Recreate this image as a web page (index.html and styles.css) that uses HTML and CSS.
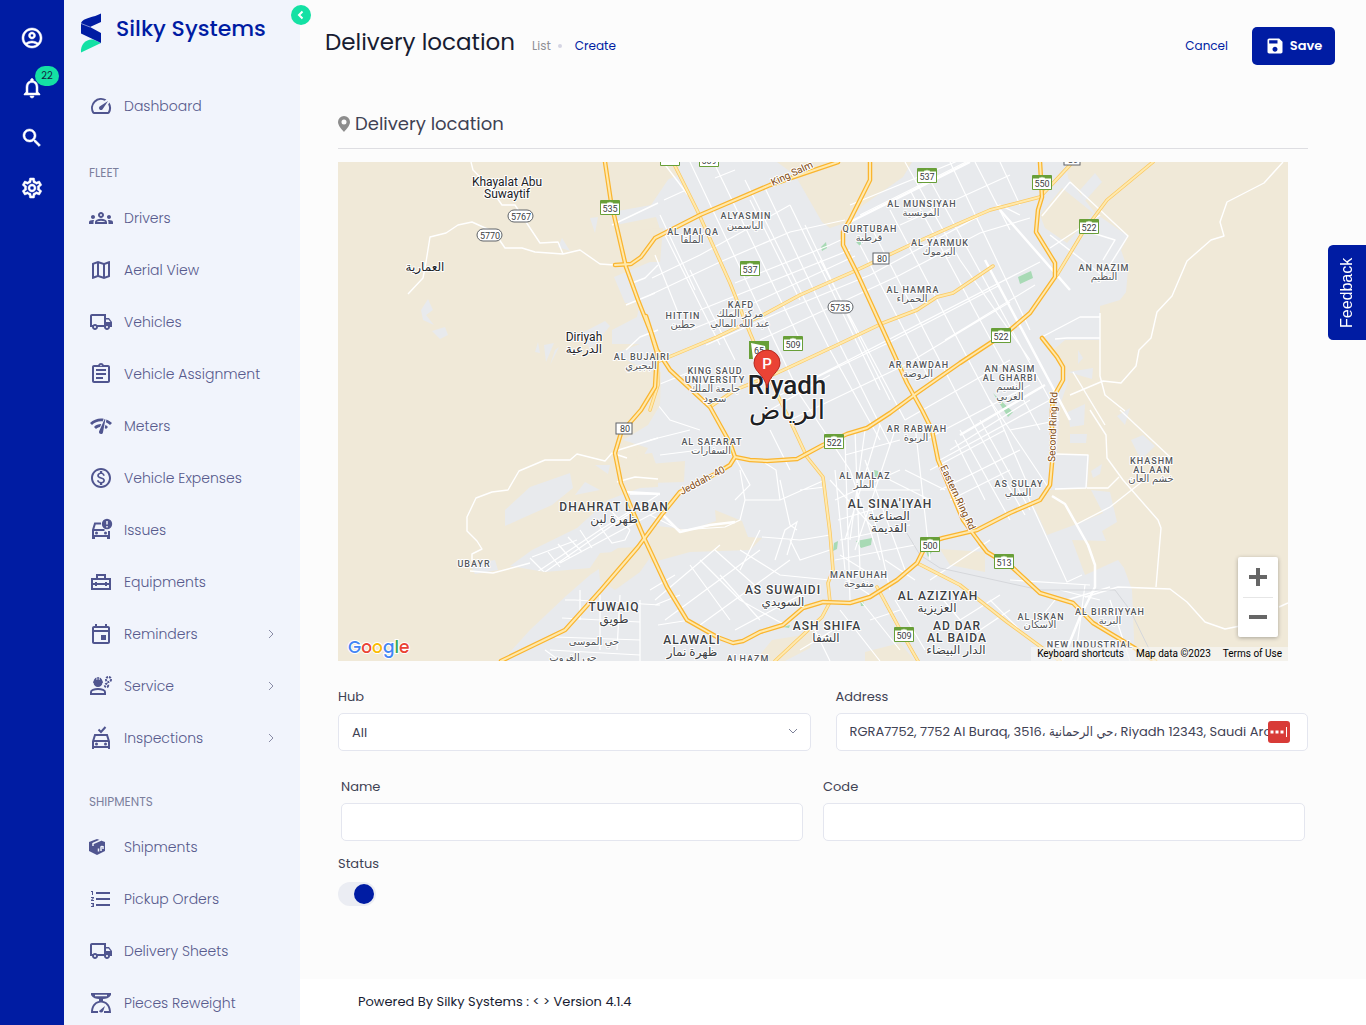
FILE: index.html
```
<!DOCTYPE html>
<html lang="en">

<head>
    <meta charset="utf-8">
    <meta name="viewport" content="width=device-width, initial-scale=1">
    <title>Delivery location - Silky Systems</title>
    <link rel="stylesheet" href="styles.css">
</head>

<body>
    <div class="app">
        <div class="rail">
            <button class="rail-btn" aria-label="Account">
                <svg class="icon" viewBox="0 0 24 24"><path d="M12 2C6.48 2 2 6.48 2 12s4.48 10 10 10 10-4.48 10-10S17.52 2 12 2zM7.35 18.5C8.66 17.56 10.26 17 12 17s3.34.56 4.65 1.5C15.34 19.44 13.74 20 12 20s-3.34-.56-4.65-1.5zm10.79-1.38C16.45 15.8 14.32 15 12 15s-4.45.8-6.14 2.12C4.7 15.73 4 13.95 4 12c0-4.42 3.58-8 8-8s8 3.58 8 8c0 1.95-.7 3.73-1.86 5.12zM12 6c-1.93 0-3.5 1.57-3.5 3.5S10.07 13 12 13s3.5-1.57 3.5-3.5S13.93 6 12 6zm0 5c-.83 0-1.5-.67-1.5-1.5S11.17 8 12 8s1.5.67 1.5 1.5S12.83 11 12 11z"/></svg>
            </button>
            <button class="rail-btn" aria-label="Notifications">
                <svg class="icon" viewBox="0 0 24 24"><path d="M12 22c1.1 0 2-.9 2-2h-4c0 1.1.9 2 2 2zm6-6v-5c0-3.07-1.63-5.64-4.5-6.32V4c0-.83-.67-1.5-1.5-1.5s-1.5.67-1.5 1.5v.68C7.64 5.36 6 7.92 6 11v5l-2 2v1h16v-1l-2-2zm-2 1H8v-6c0-2.48 1.51-4.5 4-4.5s4 2.02 4 4.5v6z"/></svg>
                <span class="badge">22</span>
            </button>
            <button class="rail-btn" aria-label="Search">
                <svg class="icon" viewBox="0 0 24 24"><path d="M15.5 14h-.79l-.28-.27C15.41 12.59 16 11.11 16 9.5 16 5.91 13.09 3 9.5 3S3 5.91 3 9.5 5.91 16 9.5 16c1.61 0 3.09-.59 4.23-1.57l.27.28v.79l5 4.99L20.49 19l-4.99-5zm-6 0C7.01 14 5 11.99 5 9.5S7.01 5 9.5 5 14 7.01 14 9.5 11.99 14 9.5 14z"/></svg>
            </button>
            <button class="rail-btn" aria-label="Settings">
                <svg class="icon" viewBox="0 0 24 24"><path d="M19.43 12.98c.04-.32.07-.64.07-.98s-.03-.66-.07-.98l2.11-1.65c.19-.15.24-.42.12-.64l-2-3.46c-.09-.16-.26-.25-.44-.25-.06 0-.12.01-.17.03l-2.49 1c-.52-.4-1.08-.73-1.69-.98l-.38-2.65C14.46 2.18 14.25 2 14 2h-4c-.25 0-.46.18-.49.42l-.38 2.65c-.61.25-1.17.59-1.69.98l-2.49-1c-.06-.02-.12-.03-.18-.03-.17 0-.34.09-.43.25l-2 3.46c-.13.22-.07.49.12.64l2.11 1.65c-.04.32-.07.65-.07.98s.03.66.07.98l-2.11 1.65c-.19.15-.24.42-.12.64l2 3.46c.09.16.26.25.44.25.06 0 .12-.01.17-.03l2.49-1c.52.4 1.08.73 1.69.98l.38 2.65c.03.24.24.42.49.42h4c.25 0 .46-.18.49-.42l.38-2.65c.61-.25 1.17-.59 1.69-.98l2.49 1c.06.02.12.03.18.03.17 0 .34-.09.43-.25l2-3.46c.12-.22.07-.49-.12-.64l-2.11-1.65zm-1.98-1.71c.04.31.05.52.05.73 0 .21-.02.43-.05.73l-.14 1.13.89.7 1.08.84-.7 1.21-1.27-.51-1.04-.42-.9.68c-.43.32-.84.56-1.25.73l-1.06.43-.16 1.13-.2 1.35h-1.4l-.19-1.35-.16-1.13-1.06-.43c-.43-.18-.83-.41-1.23-.71l-.91-.7-1.06.43-1.27.51-.7-1.21 1.08-.84.89-.7-.14-1.13c-.03-.31-.05-.54-.05-.74s.02-.43.05-.73l.14-1.13-.89-.7-1.08-.84.7-1.21 1.27.51 1.04.42.9-.68c.43-.32.84-.56 1.25-.73l1.06-.43.16-1.13.2-1.35h1.39l.19 1.35.16 1.13 1.06.43c.43.18.83.41 1.23.71l.91.7 1.06-.43 1.27-.51.7 1.21-1.07.85-.89.7.14 1.13zM12 8c-2.21 0-4 1.79-4 4s1.79 4 4 4 4-1.79 4-4-1.79-4-4-4zm0 6c-1.1 0-2-.9-2-2s.9-2 2-2 2 .9 2 2-.9 2-2 2z"/></svg>
            </button>
        </div>

        <aside class="sidebar">
            <a class="brand" href="#">
                <svg class="brand-logo" viewBox="0 0 22 40">
                    <path class="logo-green" d="M1 39.500C0 31 7 25.500 13 26.500l8 3.500z"/>
                    <path class="logo-blue" d="M21 .5V9l-11 5 11 6v10L1 20.500V10C3 4.500 14 4.500 21 .5z"/>
                    <path class="logo-line" d="M1 10.500l9 3.500"/>
                </svg>
                <span>Silky Systems</span>
            </a>
            <button class="collapse" aria-label="Collapse menu">
                <svg viewBox="0 0 20 20"><path d="M11.500 6.500L8 10l3.500 3.500"/></svg>
            </button>
            <nav>
                <ul class="menu menu-top">
                    <li><a href="#">
                        <svg class="icon" viewBox="0 0 24 24"><path d="M20.38 8.57l-1.23 1.85a8 8 0 0 1-.22 7.58H5.07A8 8 0 0 1 15.58 6.85l1.85-1.23A10 10 0 0 0 3.35 19a2 2 0 0 0 1.72 1h13.85a2 2 0 0 0 1.74-1 10 10 0 0 0-.27-10.440z"/><path d="M10.59 15.41a2 2 0 0 0 2.83 0l5.66-8.49-8.49 5.66a2 2 0 0 0 0 2.83z"/></svg>
                        Dashboard</a></li>
                </ul>
                <h2 class="menu-title">FLEET</h2>
                <ul class="menu">
                    <li><a href="#">
                        <svg class="icon" viewBox="0 0 24 24"><path fill-rule="evenodd" d="M12 12.750c1.63 0 3.07.39 4.24.9 1.08.48 1.76 1.56 1.76 2.73V18H6v-1.610c0-1.180.68-2.260 1.760-2.730 1.170-.52 2.610-.91 4.240-.91zM8.070 16h7.860c-.1-.23-.14-.39-.91-.69-.97-.38-1.990-.56-3.020-.56s-2.050.18-3.020.56c-.78.3-.82.460-.91.690zM4 13c1.100 0 2-.9 2-2s-.9-2-2-2-2 .9-2 2 .9 2 2 2zm1.130 1.100c-.37-.06-.74-.1-1.130-.1-.99 0-1.930.21-2.780.58C.48 14.900 0 15.620 0 16.430V18h4.500v-1.610c0-.83.23-1.610.63-2.290zM20 13c1.100 0 2-.9 2-2s-.9-2-2-2-2 .9-2 2 .9 2 2 2zm4 3.430c0-.81-.48-1.530-1.220-1.850-.85-.37-1.790-.58-2.780-.58-.39 0-.76.04-1.130.1.400.680.630 1.460.630 2.290V18H24v-1.570zM12 6c1.660 0 3 1.340 3 3s-1.340 3-3 3-3-1.340-3-3 1.340-3 3-3zm0 2a1 1 0 1 0 0 2 1 1 0 0 0 0-2z"/></svg>
                        Drivers</a></li>
                    <li><a href="#">
                        <svg class="icon" viewBox="0 0 24 24"><path d="M20.500 3l-.16.03L15 5.100 9 3 3.360 4.900c-.21.07-.36.25-.36.48V20.500c0 .28.22.5.5.5l.16-.03L9 18.900l6 2.100 5.640-1.900c.21-.07.36-.25.36-.48V3.500c0-.28-.22-.5-.5-.5zM10 5.470l4 1.400v11.660l-4-1.400V5.470zm-5 .99l3-1.010v11.700l-3 1.160V6.460zm14 11.080l-3 1.010V6.860l3-1.160v11.840z"/></svg>
                        Aerial View</a></li>
                    <li><a href="#">
                        <svg class="icon" viewBox="0 0 24 24"><path d="M20 8h-3V4H3c-1.100 0-2 .9-2 2v11h2c0 1.660 1.340 3 3 3s3-1.340 3-3h6c0 1.660 1.340 3 3 3s3-1.340 3-3h2v-5l-3-4zm-.5 1.500l1.960 2.500H17V9.500h2.500zM6 18c-.55 0-1-.45-1-1s.45-1 1-1 1 .45 1 1-.45 1-1 1zm2.220-3c-.55-.61-1.330-1-2.220-1s-1.670.39-2.220 1H3V6h12v9H8.220zM18 18c-.55 0-1-.45-1-1s.45-1 1-1 1 .45 1 1-.45 1-1 1z"/></svg>
                        Vehicles</a></li>
                    <li><a href="#">
                        <svg class="icon" viewBox="0 0 24 24"><path d="M7 15h7v2H7zm0-4h10v2H7zm0-4h10v2H7zm12-4h-4.180C14.400 1.840 13.300 1 12 1c-1.300 0-2.400.84-2.820 2H5c-1.100 0-2 .9-2 2v14c0 1.100.9 2 2 2h14c1.100 0 2-.9 2-2V5c0-1.100-.9-2-2-2zm-7-.25c.41 0 .75.34.75.75s-.34.75-.75.75-.75-.34-.75-.75.34-.75.75-.75zM19 19H5V5h14v14z"/></svg>
                        Vehicle Assignment</a></li>
                    <li><a href="#">
                        <svg class="icon" viewBox="0 0 24 24"><path d="M15.900 5c-.17 0-.32.09-.41.23l-.07.15-5.180 11.650c-.16.29-.26.61-.26.96 0 1.110.9 2.010 2.010 2.010.96 0 1.770-.68 1.960-1.590l.01-.03L16.400 5.500c0-.28-.22-.5-.5-.5zM1 9l2 2c2.880-2.880 6.790-4.080 10.530-3.620l1.190-2.680C9.890 3.840 4.740 5.270 1 9zm20 2l2-2c-1.640-1.640-3.550-2.820-5.590-3.570l-.53 2.820c1.500.62 2.900 1.530 4.120 2.750zm-4 4l2-2c-.8-.8-1.700-1.420-2.660-1.890l-.55 2.920c.42.27.83.59 1.210.97zM5 13l2 2c1.130-1.130 2.560-1.790 4.030-2l1.280-2.880c-2.630-.08-5.300.87-7.310 2.880z"/></svg>
                        Meters</a></li>
                    <li><a href="#">
                        <svg class="icon" viewBox="0 0 24 24"><path d="M12 2C6.480 2 2 6.480 2 12s4.480 10 10 10 10-4.480 10-10S17.520 2 12 2zm0 18c-4.410 0-8-3.590-8-8s3.590-8 8-8 8 3.590 8 8-3.590 8-8 8zm.31-8.860c-1.770-.45-2.340-.94-2.340-1.670 0-.84.79-1.430 2.100-1.430 1.380 0 1.900.66 1.940 1.640h1.710c-.05-1.340-.87-2.570-2.490-2.970V5H10.900v1.690c-1.510.32-2.720 1.300-2.720 2.810 0 1.790 1.490 2.690 3.660 3.210 1.950.46 2.340 1.150 2.340 1.870 0 .53-.39 1.390-2.100 1.390-1.600 0-2.230-.72-2.320-1.640H8.040c.1 1.700 1.360 2.660 2.860 2.970V19h2.340v-1.670c1.520-.29 2.720-1.160 2.730-2.770-.01-2.200-1.900-2.960-3.660-3.420z"/></svg>
                        Vehicle Expenses</a></li>
                    <li><a href="#">
                        <svg class="icon" viewBox="0 0 24 24"><path class="line" d="M12 5.500H6L4 12v9M4 12h11.500M4 18h16M20 13v8"/><circle cx="7.500" cy="15" r="1.500"/><circle cx="16.500" cy="15" r="1.500"/><path d="M3 18h3v3H3zM18 18h3v3h-3z"/><circle cx="18" cy="6" r="5.200"/><path class="cut" d="M18 3v3.500M18 8v1.500"/></svg>
                        Issues</a></li>
                    <li><a href="#">
                        <svg class="icon" viewBox="0 0 24 24"><path class="line" d="M3 9h18v10H3zM8 9V5h8v4M3 14h18"/><path d="M6 12h2v4H6zM16 12h2v4h-2z"/></svg>
                        Equipments</a></li>
                    <li><a href="#">
                        <svg class="icon" viewBox="0 0 24 24"><path d="M19 4h-1V2h-2v2H8V2H6v2H5c-1.110 0-1.990.9-1.990 2L3 20c0 1.100.89 2 2 2h14c1.100 0 2-.9 2-2V6c0-1.100-.9-2-2-2zm0 16H5V10h14v10zm0-12H5V6h14v2zm-2 5h-5v5h5v-5z"/></svg>
                        Reminders <svg class="chev" viewBox="0 0 8 10"><path d="M2 1l4 4-4 4"/></svg></a></li>
                    <li><a href="#">
                        <svg class="icon" viewBox="0 0 24 24"><path class="line" d="M2 20v-2c0-1.500 3-3 7-3s7 1.500 7 3v2z"/><path d="M4 7.500h.6C4.800 5.500 6 4 7.500 3.500V6h.8V3h1.500v3h.8V3.500C12 4 13.300 5.500 13.500 7.500h.5v1.200h-.6c0 2.600-2 4.300-4.400 4.300s-4.400-1.700-4.400-4.300H4z"/><circle class="gear" cx="19.500" cy="5.500" r="2.500"/><circle class="gear" cx="17.500" cy="11.500" r="1.700"/></svg>
                        Service <svg class="chev" viewBox="0 0 8 10"><path d="M2 1l4 4-4 4"/></svg></a></li>
                    <li><a href="#">
                        <svg class="icon" viewBox="0 0 24 24"><path class="line" d="M4 23v-7.500L6 9h12l2 6.500V23M4 15h16M4 21h16"/><circle cx="7.500" cy="18" r="1.500"/><circle cx="16.500" cy="18" r="1.500"/><path class="line" d="M9.500 3.500L12 6l4.500-5"/></svg>
                        Inspections <svg class="chev" viewBox="0 0 8 10"><path d="M2 1l4 4-4 4"/></svg></a></li>
                </ul>
                <h2 class="menu-title">SHIPMENTS</h2>
                <ul class="menu">
                    <li><a href="#">
                        <svg class="icon" viewBox="0 0 24 24"><path d="M8 4l8 3v9l-8 4-8-4V7z"/><path class="cut" d="M4 8.500l8-3.500M9.500 16.500v-3M12 16v-4l1.500-1M14 14v-3M4 8v3"/></svg>
                        Shipments</a></li>
                    <li><a href="#">
                        <svg class="icon" viewBox="0 0 24 24"><path d="M2 17h2v.5H3v1h1v.5H2v1h3v-4H2v1zm1-9h1V4H2v1h1v3zm-1 3h1.800L2 13.100v.9h3v-1H3.200L5 10.900V10H2v1zm5-6v2h14V5H7zm0 14h14v-2H7v2zm0-6h14v-2H7v2z"/></svg>
                        Pickup Orders</a></li>
                    <li><a href="#">
                        <svg class="icon" viewBox="0 0 24 24"><path d="M20 8h-3V4H3c-1.100 0-2 .9-2 2v11h2c0 1.660 1.340 3 3 3s3-1.340 3-3h6c0 1.660 1.340 3 3 3s3-1.340 3-3h2v-5l-3-4zm-.5 1.500l1.960 2.500H17V9.500h2.500zM6 18c-.55 0-1-.45-1-1s.45-1 1-1 1 .45 1 1-.45 1-1 1zm2.220-3c-.55-.61-1.330-1-2.220-1s-1.670.39-2.220 1H3V6h12v9H8.220zM18 18c-.55 0-1-.45-1-1s.45-1 1-1 1 .45 1 1-.45 1-1 1z"/></svg>
                        Delivery Sheets</a></li>
                    <li><a href="#">
                        <svg class="icon" viewBox="0 0 24 24"><path d="M2 2h20v2c-2 3-5 4-8 4v2c5 1 8 5 8 12h-7v-2h5c-.5-5-3.500-8.500-8-8.500S4.500 15 4 20h5v2H2C2 15 5 11 10 10V8C7 8 4 7 2 4z"/><path d="M10 20l6-5-2 5.500a2.200 2.200 0 0 1-4-.5z"/><path class="cut" d="M6 4.500h12"/></svg>
                        Pieces Reweight</a></li>
                </ul>
            </nav>
        </aside>

        <main class="main">
            <header class="page-head">
                <h1>Delivery location</h1>
                <div class="crumbs">
                    <a class="crumb-list" href="#">List</a>
                    <span class="dot"></span>
                    <a href="#">Create</a>
                </div>
                <a class="cancel" href="#">Cancel</a>
                <button class="save" type="submit" form="location-form">
                    <svg viewBox="0 0 24 24"><path d="M17 3H5c-1.110 0-2 .9-2 2v14c0 1.100.89 2 2 2h14c1.100 0 2-.9 2-2V7l-4-4zm-5 16c-1.660 0-3-1.340-3-3s1.340-3 3-3 3 1.340 3 3-1.340 3-3 3zm3-10H5V5h10v4z"/></svg>
                    Save
                </button>
            </header>

            <form class="content" id="location-form">
                <h2 class="section-title">
                    <svg viewBox="0 0 12 16"><path fill-rule="evenodd" d="M6 0a6 6 0 0 1 6 6c0 3.500-3.500 7-6 10C3.500 13 0 9.500 0 6a6 6 0 0 1 6-6zm0 3.500a2.500 2.500 0 1 0 0 5 2.500 2.500 0 0 0 0-5z"/></svg>
                    Delivery location
                </h2>

                <div class="map">
                    <svg class="map-canvas" viewBox="338 162 950 499" preserveAspectRatio="xMidYMid slice">
                        <defs>
                            <path id="city" d="M680 162H1066L1068 178 1095 213 1128 236 1121 250 1128 270 1126 292 1120 300 1100 306V340H1065L1053 350 1064 365 1068 382 1060 405 1057 455H1089L1087 488 1050 490 1032 502 1047 535 1077 524 1103 513 1091 490 1110 492 1117 522 1102 531 1106 541 1072 540 1085 575 1118 560 1124 568 1132 590 1135 661H502L530 630 566 596 590 575 640 563 660 545 645 550 600 553 590 568 545 572 510 566 532 550 577 528 608 500 640 488 658 487V468L640 462 648 448 623 440 648 425 660 405 661 372 648 370 630 362 616 353 640 344H612V330L637 317 640 303 625 303 614 277 650 262 661 232 656 217 616 225 612 212 651 205Z"/>
                            <clipPath id="city-clip"><use href="#city"/></clipPath>
                            <g id="highways">
                                <path d="M605 162L611 202 626 267 638 300 651 333 657 353 655 387 641 410 621 433 615 453 621 483 631 507 645 540 667 587 687 620 717 637 733 643 743 641 760 632 783 625 803 608 823 602 850 603 870 597 897 580 917 563 927 543 943 538 977 530 1010 513 1040 500 1050 485 1052 463V410L1053 398 1063 380V367L1057 357 1042 338"/>
                                <path d="M1040 162L1042 197 1038 210 1036 232 1055 263V277L1030 313 1010 330 960 363 917 393 890 413 867 428 847 434 823 445 797 459 767 461 750 460 735 457"/>
                                <path d="M615 265L631 264 641 257 655 238 700 215 770 185 838 162"/>
                                <path d="M870 162V180L850 220 843 232V245L857 273 883 330 907 383 922 410 932 430 938 460 963 520 980 543 987 552 1013 568 1040 593 1073 603 1093 623 1133 647 1155 661"/>
                                <path d="M646 316L657 350 670 370 710 407 730 443 735 457 730 465 717 473 680 492 663 513 638 547 601 590 565 630 501 661"/>
                            </g>
                            <g id="arterials">
                                <path d="M673 162L697 210 730 283 750 333 767 373 793 427 807 457 823 477 830 533 833 570 828 583 830 602 822 617 775 661"/>
                                <path d="M657 362L717 337 763 315 800 295 857 270 910 245 960 223 990 210 1040 197 1070 165"/>
                                <path d="M710 407L735 390 777 373 837 345 883 323 917 310 937 297 953 293 993 266"/>
                                <path d="M1057 275L1083 232 1107 200 1153 162"/>
                                <path d="M917 563L960 585 1007 622 1060 661"/>
                                <path d="M877 587L903 635 918 661"/>
                                <path d="M657 355L658 385 650 410"/>
                            </g>
                            <symbol id="shield" viewBox="0 0 20 15">
                                <rect class="shield-green" width="20" height="15" rx="1"/>
                                <path class="shield-white" d="M1 3.500H7L8 2 9 3 10 1.500 11 3 12 2 13 3.500H19V14H1z"/>
                            </symbol>
                        </defs>

                        <rect class="sand" x="338" y="162" width="950" height="499"/>
                        <use class="city" href="#city"/>
                        <g class="city">
                            <path d="M505 510L530 487 570 473 573 488 552 505 525 517 505 526zM428 299L433 310 426 315 434 325 423 320 421 310zM432 331L445 327 448 335 440 339zM535 352L538 342 540 353zM544 345L554 343 546 362zM555 350L559 347 550 365zM582 333L605 321 610 326 590 350zM590 218L598 217 595 233zM558 247L562 238 570 251zM470 564L495 560 498 570 475 574zM590 575L612 560 618 562 600 580zM595 465H610L608 474zM575 495L585 482 600 490z"/>
                            <path d="M1131 440L1143 435 1155 446 1141 460zM1117 416L1130 408 1125 425zM1091 471L1102 464 1100 474 1093 478zM1078 350L1083 358 1078 364zM1080 190L1095 173 1102 182 1084 202zM1068 372L1093 368 1092 379zM1068 412L1085 404 1084 425 1070 427zM1070 434H1087L1086 443H1070z"/>
                        </g>
                        <g class="sand">
                            <path d="M777 162H912L903 177 862 206 848 222 830 228 822 222 795 175z"/>
                            <path d="M1040 215L1062 188 1093 213 1067 243 1045 228zM650 464L685 461 684 482 650 483zM636 455L652 453 658 470 640 465z"/>
                            <path d="M650 525L690 530 716 521 715 510 742 521 748 537 762 538 750 550 690 552 650 563zM772 640L803 635 815 625 810 648 785 661H755zM865 652L900 643 915 661H865zM940 549L985 552 985 572 950 565z"/>
                            <path d="M598 560L618 548 658 546 640 572 615 590 600 580zM650 162H680L677 176 650 186zM640 230L663 228 660 262H648z"/>
                        </g>
                        <g class="park">
                            <path d="M1018 277L1031 271 1033 278 1020 284zM821 247L826 242 827 248 822 251zM856 242L862 241 860 246zM993 393L998 398 1013 412 1008 417zM856 541L872 538 871 545 861 548zM834 543L838 541 837 549 833 551zM874 470L878 471 880 480 875 477zM860 600H863L864 606H861zM926 551L932 552 928 557zM783 627L790 625 789 628z"/>
                        </g>

                        <g class="streets" clip-path="url(#city-clip)">
                            <path d="M664 200L686 190M715 178L735 170M650 295L720 262 790 232 845 220M652 278L700 255 760 222 790 205M735 283L830 245 845 238M700 310L850 250M690 330L720 318 760 300 855 256M706 345L780 312 870 275 1000 205 1020 215M760 340L900 275 980 233 1030 218M650 388L700 368M780 395L890 342 1000 285M790 420L905 365 1010 302M800 385L1040 262M945 340L1035 285M860 215L1030 130M850 205L960 160M900 225L1010 175M700 385L740 366M905 420L1010 360M925 440L1030 385M940 460L1050 400M770 410L830 375"/>
                            <path d="M690 162L760 310 800 395 850 470M715 165L800 340M745 180L830 350 880 440M765 188L840 345 890 445M665 235L720 345M690 270L735 360M655 255L685 330M805 225L860 340M790 205L880 390M820 260L905 420M870 225L960 400 1010 490M890 210L1000 420 1030 490M910 190L980 320 1040 430M930 180L1050 400M905 162L960 260 1030 360M950 162L1030 330M975 162L1010 230M1000 162L1020 205M860 245L930 380M840 300L890 400M750 200L800 300M660 215L695 290"/>
                            <path d="M650 395L670 420 700 430M690 430L650 440M660 455L700 450M740 470L745 500 740 520 725 527 680 530 650 515M745 500H780L776 470 765 463M780 480L790 525 797 530M800 490L825 487M780 500L825 480M770 430L790 470M735 457L750 485 735 500M762 537L800 540 830 535M775 560L785 530 797 522 787 555M790 540L800 560 830 550M740 550L780 575 830 580M760 530L740 570M700 560L740 600M715 550L760 590M690 565L730 620M655 600L720 545M665 620L760 550M700 625L790 560M735 630L810 590M740 600L785 625M720 575L760 620M810 620L830 661M840 610L880 661M860 600L900 650M800 650L850 620"/>
                            <path d="M835 470L845 570M845 440L850 600M855 430L860 570M865 430L850 540M880 425L845 540M895 430L855 550M835 500L900 470M838 520L905 500M840 540L910 525M835 560L915 545M850 470L880 560M865 460L905 570M830 480L875 530M840 555L880 580M855 490H920M845 455L900 440M905 470L945 490M915 425L930 560M890 480L930 500M930 580L990 540M870 500L890 590M840 575L870 595M885 560L915 580"/>
                            <path d="M930 470L1005 430M940 490L1020 450M960 430L1010 520M980 420L1030 510M950 500L1010 470M990 400L1050 490M955 440L985 500M1025 490L1067 582 1082 575M1005 480L1025 515M950 450L1030 400M1010 430L1060 420M895 600L925 650M935 590L960 620 1000 595M870 620L900 610M965 640L1010 610M990 600L1030 640M1010 580L1090 585M1060 590L1100 600M1085 585L1075 661M1055 600L1035 625M1110 600L1130 661"/>
                            <path d="M532 557L577 540M537 572L600 530 640 505M545 572L620 520 658 495M560 563L665 507M530 558L545 573M548 552L560 567M558 544L570 558M568 537L582 552M580 530L592 548M595 520L612 543 625 540 630 530M610 510L630 530M565 600L575 600 660 605M562 618L640 622M580 590V620M600 595V650M620 595L617 650M640 600V661M555 637L640 640M550 650L640 655M545 650L560 661M650 590L675 575M655 605L680 595M658 625L690 620"/>
                        </g>
                        <g class="roads">
                            <path d="M408 294L423 278 426 262 430 237 446 233 458 225 472 222 494 232 505 248 522 248 535 252 563 254 580 250 600 264 615 265M471 162L473 170 488 185 502 205 515 205 530 228 540 243 558 242 563 254M663 162L688 195M612 225L658 203M626 305L655 293M632 283L645 278 658 265M626 350L640 337 658 330"/>
                            <path d="M472 561L472 554 482 549 477 541 467 531V517L476 498 492 492 508 490 519 471 545 460 570 460 577 454 605 461 612 453 627 458M470 571L493 573 530 563M617 482L635 477 658 479M615 451L658 438M630 494H658"/>
                            <path d="M1283 162L1264 183 1227 202 1220 222 1224 236 1211 240 1187 261 1172 296 1157 312 1151 338 1139 350 1136 366 1121 383 1103 381 1070 395M1100 313V376L1105 395 1125 411"/>
                            <path d="M1070 182L1128 236 1103 276 1050 235M1042 216L1070 182M1050 248L1100 215M1083 230L1115 240 1103 260M1040 338L1080 317H1100M1055 339L1067 338 1100 338"/>
                            <path d="M1090 410L1106 435 1107 458 1123 480 1158 520 1161 528 1156 587M1120 410L1170 457M1055 454L1088 455 1086 488 1055 489M1087 488H1108L1119 477M1077 524L1110 507 1143 481M1073 372L1105 425"/>
                            <path d="M1085 597L1118 587 1170 589 1187 602 1205 622 1225 629 1240 626M1279 607L1288 603M1067 600L1110 587"/>
                            <path class="wide" d="M1052 496L1065 504 1088 545 1095 565V587L1080 617 1062 661M850 222L970 162M1000 210L1070 290M960 435L1045 385M625 492L660 494M985 260L1070 420M663 515L680 532 710 525 735 522"/>
                        </g>
                        <path class="rail-line" d="M905 530L920 555 940 568 1040 590 1115 590 1130 610 1155 661"/>

                        <use class="edge thin" href="#arterials"/>
                        <use class="fill thin" href="#arterials"/>
                        <use class="edge" href="#highways"/>
                        <use class="fill" href="#highways"/>

                        <g class="lbl town">
                            <text x="507" y="186">Khayalat Abu</text>
                            <text x="507" y="198">Suwaytif</text>
                            <text x="425" y="271">العمارية</text>
                            <text x="584" y="341">Diriyah</text>
                            <text x="584" y="353">الدرعية</text>
                        </g>
                        <g class="lbl small">
                            <text x="746" y="219">ALYASMIN</text>
                            <text x="693" y="235">AL MALQA</text>
                            <text x="870" y="232">QURTUBAH</text>
                            <text x="922" y="207">AL MUNSIYAH</text>
                            <text x="940" y="246">AL YARMUK</text>
                            <text x="913" y="293">AL HAMRA</text>
                            <text x="1104" y="271">AN NAZIM</text>
                            <text x="741" y="308">KAFD</text>
                            <text x="683" y="319">HITTIN</text>
                            <text x="642" y="360">AL BUJAIRI</text>
                            <text x="715" y="374">KING SAUD</text>
                            <text x="715" y="383">UNIVERSITY</text>
                            <text x="919" y="368">AR RAWDAH</text>
                            <text x="1010" y="372">AN NASIM</text>
                            <text x="1010" y="381">AL GHARBI</text>
                            <text x="712" y="445">AL SAFARAT</text>
                            <text x="917" y="432">AR RABWAH</text>
                            <text x="865" y="479">AL MALAZ</text>
                            <text x="1019" y="487">AS SULAY</text>
                            <text x="1152" y="464">KHASHM</text>
                            <text x="1152" y="473">AL AAN</text>
                            <text x="859" y="578">MANFUHAH</text>
                            <text x="474" y="567">UBAYR</text>
                            <text x="1041" y="620">AL ISKAN</text>
                            <text x="1110" y="615">AL BIRRIYYAH</text>
                            <text x="1090" y="648">NEW INDUSTRIAL</text>
                            <text x="748" y="662">ALHAZM</text>
                        </g>
                        <g class="lbl big">
                            <text x="614" y="511">DHAHRAT LABAN</text>
                            <text x="890" y="508">AL SINA'IYAH</text>
                            <text x="783" y="594">AS SUWAIDI</text>
                            <text x="614" y="611">TUWAIQ</text>
                            <text x="692" y="644">ALAWALI</text>
                            <text x="827" y="630">ASH SHIFA</text>
                            <text x="938" y="600">AL AZIZIYAH</text>
                            <text x="957" y="630">AD DAR</text>
                            <text x="957" y="642">AL BAIDA</text>
                        </g>
                        <g class="lbl ar">
                            <text x="745" y="229">الياسمين</text>
                            <text x="692" y="243">الملقا</text>
                            <text x="869" y="241">قرطبة</text>
                            <text x="921" y="216">المونسية</text>
                            <text x="939" y="255">اليرموك</text>
                            <text x="912" y="302">الحمراء</text>
                            <text x="1104" y="280">النظيم</text>
                            <text x="740" y="317">مركز الملك</text>
                            <text x="740" y="327">عبد الله المالي</text>
                            <text x="683" y="328">حطين</text>
                            <text x="641" y="369">البجيري</text>
                            <text x="715" y="392">جامعة الملك</text>
                            <text x="715" y="402">سعود</text>
                            <text x="918" y="377">الروضة</text>
                            <text x="1010" y="390">النسيم</text>
                            <text x="1010" y="400">الغربي</text>
                            <text x="711" y="454">السفارات</text>
                            <text x="916" y="441">الربوة</text>
                            <text x="864" y="488">الملز</text>
                            <text x="1018" y="496">السلي</text>
                            <text x="1151" y="482">خشم العان</text>
                            <text x="859" y="587">منفوحة</text>
                            <text x="1040" y="628">الاسكان</text>
                            <text x="1110" y="624">البرية</text>
                            <text x="594" y="645">حي الموسى</text>
                            <text x="573" y="661">حي الغروب</text>
                        </g>
                        <g class="lbl ar-big">
                            <text x="614" y="523">ظهرة لبن</text>
                            <text x="889" y="520">الصناعية</text>
                            <text x="889" y="532">القديمة</text>
                            <text x="783" y="606">السويدي</text>
                            <text x="614" y="623">طويق</text>
                            <text x="692" y="656">ظهرة نمار</text>
                            <text x="826" y="642">الشفا</text>
                            <text x="937" y="612">العزيزية</text>
                            <text x="956" y="654">الدار البيضاء</text>
                        </g>
                        <g class="lbl road-name">
                            <text transform="translate(773 186) rotate(-25)">King Salm</text>
                            <text transform="translate(682 495) rotate(-28)">Jeddah- 40</text>
                            <text transform="translate(940 467) rotate(65)">Eastern Ring Rd</text>
                            <text transform="translate(1055 462) rotate(-88)">Second Ring Rd</text>
                        </g>

                        <g class="shields">
                            <use href="#shield" x="600" y="200" width="20" height="15"/><text x="610" y="212">535</text>
                            <use href="#shield" x="660" y="151" width="20" height="15"/>
                            <use href="#shield" x="699" y="152" width="20" height="15"/><text x="709" y="164">509</text>
                            <use href="#shield" x="917" y="168" width="20" height="15"/><text x="927" y="180">537</text>
                            <use href="#shield" x="1032" y="175" width="20" height="15"/><text x="1042" y="187">550</text>
                            <use href="#shield" x="1079" y="219" width="20" height="15"/><text x="1089" y="231">522</text>
                            <use href="#shield" x="740" y="261" width="20" height="15"/><text x="750" y="273">537</text>
                            <use href="#shield" x="783" y="336" width="20" height="15"/><text x="793" y="348">509</text>
                            <use href="#shield" x="991" y="328" width="20" height="15"/><text x="1001" y="340">522</text>
                            <rect class="shield-green" x="749" y="341" width="20" height="18"/>
                            <path class="shield-white" d="M751 343l14 3 2 13h-14z"/><text x="759" y="354">65</text>
                            <use href="#shield" x="824" y="434" width="20" height="15"/><text x="834" y="446">522</text>
                            <use href="#shield" x="920" y="537" width="20" height="15"/><text x="930" y="549">500</text>
                            <use href="#shield" x="994" y="554" width="20" height="15"/><text x="1004" y="566">513</text>
                            <use href="#shield" x="894" y="627" width="20" height="15"/><text x="904" y="639">509</text>
                            <rect class="plate" x="508" y="210" width="25" height="12" rx="6"/><text x="521" y="220">5767</text>
                            <rect class="plate" x="477" y="229" width="25" height="12" rx="6"/><text x="490" y="239">5770</text>
                            <rect class="plate" x="828" y="301" width="25" height="12" rx="6"/><text x="840" y="311">5735</text>
                            <rect class="plate" x="873" y="253" width="16" height="11"/><text x="882" y="262">80</text>
                            <rect class="plate" x="616" y="423" width="16" height="11"/><text x="625" y="432">80</text>
                            <rect class="plate" x="1064" y="154" width="16" height="11"/><text x="1073" y="163">80</text>
                        </g>

                        <g class="lbl capital">
                            <text x="787" y="394">Riyadh</text>
                            <text x="787" y="419">الرياض</text>
                        </g>
                        <g class="marker">
                            <path d="M767 350a13 13 0 0 1 13 13c0 9-11 12-13 25-2-13-13-16-13-25a13 13 0 0 1 13-13z"/>
                            <text x="767" y="369">P</text>
                        </g>
                        <text class="google" x="348" y="653"><tspan class="g-blue">G</tspan><tspan class="g-red">o</tspan><tspan class="g-yellow">o</tspan><tspan class="g-blue">g</tspan><tspan class="g-green">l</tspan><tspan class="g-red">e</tspan></text>
                    </svg>
                    <div class="zoom">
                        <button type="button" aria-label="Zoom in"><svg viewBox="0 0 18 18"><path d="M7 0h4v7h7v4h-7v7H7v-7H0V7h7z"/></svg></button>
                        <button type="button" aria-label="Zoom out"><svg viewBox="0 0 18 18"><path d="M0 7h18v4H0z"/></svg></button>
                    </div>
                    <div class="map-legal">
                        <button type="button">Keyboard shortcuts</button>
                        <span>Map data ©2023</span>
                        <a href="#">Terms of Use</a>
                    </div>
                </div>

                <div class="row">
                    <div class="field">
                        <label for="hub">Hub</label>
                        <select id="hub"><option>All</option></select>
                        <svg class="select-arrow" viewBox="0 0 10 6"><path d="M1 1l4 4 4-4"/></svg>
                    </div>
                    <div class="field field-address">
                        <label for="address">Address</label>
                        <input id="address" type="text" value="RGRA7752, 7752 Al Buraq, 3516، حي الرحمانية، Riyadh 12343, Saudi Arabia">
                        <svg class="filler" viewBox="0 0 22 22"><rect width="22" height="22" rx="3"/><path d="M2.500 9.500h3v3h-3zM7.500 9.500h3v3h-3zM12.500 9.500h3v3h-3zM18 6h1v10h-1z"/></svg>
                    </div>
                </div>
                <div class="row row-names">
                    <div class="field">
                        <label for="name">Name</label>
                        <input id="name" type="text">
                    </div>
                    <div class="field">
                        <label for="code">Code</label>
                        <input id="code" type="text">
                    </div>
                </div>
                <div class="status">
                    <label for="status">Status</label>
                    <input class="switch" id="status" type="checkbox" checked>
                </div>
            </form>

            <footer class="footer">Powered By Silky Systems : &lt; &gt; Version 4.1.4</footer>
        </main>
    </div>

    <button class="feedback">Feedback</button>
</body>

</html>
```

FILE: styles.css
```
* {
    box-sizing: border-box;
}

body {
    margin: 0;
    font-family: Poppins, "DejaVu Sans Condensed", "Open Sans", sans-serif;
    font-size: 13px;
    color: #3f4254;
    background-color: #fcfcfc;
}

a {
    color: #001ca3;
    text-decoration: none;
}

button {
    border: none;
    padding: 0;
    font-family: inherit;
    cursor: pointer;
}

.app {
    display: flex;
    height: 100vh;
    overflow: hidden;
}

.icon {
    width: 24px;
    height: 24px;
    fill: currentColor;
    flex: none;
}

/* left rail */
.rail {
    flex: none;
    width: 64px;
    padding-top: 13px;
    background-color: #001ca3;
}

.rail-btn {
    position: relative;
    display: flex;
    align-items: center;
    justify-content: center;
    width: 64px;
    height: 50px;
    background: none;
    color: #fff;
}

.rail-btn .icon {
    stroke: currentColor;
    stroke-width: 0.5;
}

.badge {
    position: absolute;
    top: 3px;
    right: 5px;
    width: 24px;
    border-radius: 10px;
    background-color: #14e1a4;
    color: #16213e;
    font-size: 10px;
    line-height: 20px;
}

/* sidebar */
.sidebar {
    position: relative;
    flex: none;
    width: 236px;
    background-color: #f1f4fc;
}

.brand {
    display: flex;
    gap: 14px;
    height: 80px;
    padding: 13px 0 0 16px;
    font-size: 22px;
    font-weight: 500;
    line-height: 32px;
}

.brand-logo {
    width: 22px;
    height: 40px;
}

.logo-blue {
    fill: #001ca3;
}

.logo-green {
    fill: #14e1a4;
}

.logo-line {
    stroke: #7f8dd1;
}

.collapse {
    position: absolute;
    top: 5px;
    right: -11px;
    width: 20px;
    height: 20px;
    border-radius: 50%;
    background-color: #14e1a4;
}

.collapse svg {
    display: block;
    fill: none;
    stroke: #fff;
    stroke-width: 2;
}

.menu {
    list-style: none;
    margin: 0;
    padding: 0;
}

.menu-top {
    margin-bottom: 3px;
}

.menu a {
    display: flex;
    align-items: center;
    gap: 11px;
    height: 52px;
    padding: 0 25px;
    color: #575a8c;
    font-size: 14px;
    font-weight: 300;
}

.menu .icon {
    color: #50558f;
}

.line,
.gear {
    fill: none;
    stroke: currentColor;
    stroke-width: 2;
}

.gear {
    stroke-dasharray: 2 1;
}

.cut {
    fill: none;
    stroke: #f1f4fc;
    stroke-width: 1.5;
}

.chev {
    width: 8px;
    height: 10px;
    margin-left: auto;
    fill: none;
    stroke: #8a8ca6;
}

.menu-title {
    margin: 0;
    padding: 29px 25px 10px;
    font-size: 12px;
    font-weight: 400;
    line-height: 18px;
    color: #7c7f9c;
}

/* page */
.main {
    flex: 1;
    min-width: 0;
    display: flex;
    flex-direction: column;
}

.page-head {
    display: flex;
    align-items: baseline;
    padding: 27px 31px 0 25px;
}

h1 {
    margin: 0;
    font-size: 23px;
    font-weight: 400;
    line-height: 30px;
    color: #181c32;
}

.crumbs {
    display: flex;
    align-items: center;
    margin-left: 17px;
    font-size: 12px;
}

.crumb-list {
    color: #8f8f95;
}

.dot {
    width: 4px;
    height: 4px;
    margin: 0 13px 0 7px;
    border-radius: 50%;
    background-color: #d5d5e3;
}

.cancel {
    margin-left: auto;
    font-size: 12px;
}

.save {
    align-self: flex-start;
    display: flex;
    align-items: center;
    justify-content: center;
    gap: 5px;
    width: 83px;
    height: 38px;
    margin-left: 24px;
    border-radius: 5px;
    background-color: #001ca3;
    color: #fff;
    font-size: 13px;
    font-weight: 600;
}

.save svg {
    width: 20px;
    height: 20px;
    fill: #fff;
}

.content {
    flex: 1;
    padding: 45px 58px 0 38px;
}

.section-title {
    display: flex;
    align-items: center;
    gap: 5px;
    margin: 0 0 13px;
    padding-bottom: 10px;
    border-bottom: 1px solid #dedee2;
    font-size: 18px;
    font-weight: 400;
    line-height: 28px;
}

.section-title svg {
    width: 12px;
    height: 16px;
    fill: #8d8d8d;
}

/* map */
.map {
    position: relative;
    height: 499px;
    margin-right: 20px;
    overflow: hidden;
}

.map-canvas {
    display: block;
    width: 100%;
    height: 100%;
}

.map-canvas text {
    font-family: Roboto, "DejaVu Sans", sans-serif;
    text-anchor: middle;
}

.sand {
    fill: #f0e9d8;
}

.city {
    fill: #e8eaed;
}

.park {
    fill: #a8dab5;
}

.streets,
.roads {
    fill: none;
    stroke: #fff;
    stroke-width: 1.2;
}

.roads {
    stroke-width: 1.4;
    stroke-linejoin: round;
}

.roads .wide {
    stroke-width: 2.5;
}

.rail-line {
    fill: none;
    stroke: #d5d7db;
}

.edge,
.fill {
    fill: none;
    stroke-linecap: round;
    stroke-linejoin: round;
}

.edge {
    stroke: #fab52f;
    stroke-width: 4.5;
}

.fill {
    stroke: #ffe9ad;
    stroke-width: 2;
}

.edge.thin {
    stroke: #fbc962;
    stroke-width: 3.5;
}

.lbl {
    fill: #55585c;
    stroke: #fff;
    stroke-width: 2;
    stroke-linejoin: round;
    paint-order: stroke;
}

.town {
    font-size: 12px;
    fill: #202124;
}

.small {
    font-size: 9px;
    font-weight: 500;
    letter-spacing: 1px;
}

.big {
    font-size: 12px;
    font-weight: 500;
    letter-spacing: 1px;
    fill: #3c4043;
}

.ar {
    font-size: 10px;
}

.ar-big {
    font-size: 12px;
    fill: #3c4043;
}

.road-name {
    font-size: 10px;
    fill: #80490f;
}

.map-canvas .road-name text {
    text-anchor: start;
}

.capital {
    font-size: 26px;
    font-weight: 500;
    fill: #202124;
}

.shields {
    font-size: 9px;
    fill: #3c4043;
}

.shield-green {
    fill: #689f38;
}

.shield-white {
    fill: #fff;
}

.plate {
    fill: #fff;
    stroke: #5f6368;
}

.marker path {
    fill: #ea4335;
    stroke: #b5281e;
}

.marker text {
    fill: #fff;
    font-size: 15px;
    font-weight: 500;
}

.map-canvas .google {
    font-family: Poppins, Lato, sans-serif;
    font-size: 17px;
    font-weight: 500;
    text-anchor: start;
    stroke: #fff;
    stroke-width: 2;
    paint-order: stroke;
}

.g-blue {
    fill: #4285f4;
}

.g-red {
    fill: #ea4335;
}

.g-yellow {
    fill: #fbbc04;
}

.g-green {
    fill: #34a853;
}

.zoom {
    position: absolute;
    right: 10px;
    bottom: 24px;
    width: 40px;
    border-radius: 2px;
    background-color: #fff;
    box-shadow: 0 1px 4px rgba(0, 0, 0, 0.3);
}

.zoom button {
    display: flex;
    align-items: center;
    justify-content: center;
    width: 40px;
    height: 40px;
    background: none;
}

.zoom button + button::before {
    content: "";
    position: absolute;
    top: 40px;
    left: 5px;
    right: 5px;
    border-top: 1px solid #e6e6e6;
}

.zoom svg {
    width: 18px;
    height: 18px;
    fill: #666;
}

.map-legal {
    position: absolute;
    right: 0;
    bottom: 0;
    display: flex;
    gap: 12px;
    padding: 0 6px;
    background-color: rgba(245, 245, 245, 0.7);
    font-family: Roboto, sans-serif;
    font-size: 10px;
    line-height: 14px;
    color: #000;
}

.map-legal button,
.map-legal a {
    background: none;
    font-size: 10px;
    line-height: 14px;
    color: #000;
}

/* form */
.row {
    display: grid;
    grid-template-columns: 1fr 1fr;
    gap: 25px;
    margin-top: 26px;
}

.row-names {
    grid-template-columns: 462fr 482fr;
    gap: 20px;
    padding: 0 3px;
}

.field {
    position: relative;
}

.field label,
.status label {
    display: block;
    line-height: 20px;
    margin-bottom: 6px;
}

.field input,
.field select {
    display: block;
    width: 100%;
    height: 38px;
    padding: 0 13px;
    border: 1px solid #e4e6ef;
    border-radius: 5px;
    background-color: #fff;
    font-family: inherit;
    font-size: 13px;
    color: #3f4254;
    appearance: none;
}

.field-address input {
    padding-right: 38px;
}

.select-arrow {
    position: absolute;
    right: 13px;
    bottom: 17px;
    width: 10px;
    height: 6px;
    fill: none;
    stroke: #7e8299;
}

.filler {
    position: absolute;
    right: 18px;
    bottom: 8px;
    width: 22px;
    height: 22px;
}

.filler rect {
    fill: #d83b37;
}

.filler path {
    fill: #fff;
}

.status {
    margin-top: 13px;
}

.status label {
    margin-bottom: 8px;
}

.switch {
    display: block;
    width: 38px;
    height: 24px;
    margin: 0;
    padding: 2px;
    border-radius: 12px;
    background-color: #ebedf3;
    appearance: none;
}

.switch::before {
    content: "";
    display: block;
    width: 20px;
    height: 20px;
    border-radius: 50%;
    background-color: #fff;
}

.switch:checked::before {
    margin-left: auto;
    background-color: #001ca3;
}

.footer {
    padding: 0 58px;
    background-color: #fff;
    line-height: 46px;
    color: #181c32;
}

.feedback {
    position: fixed;
    top: 245px;
    right: 0;
    width: 38px;
    height: 95px;
    border-radius: 0 5px 5px 0;
    background-color: #001ca3;
    color: #fff;
    font-family: "Liberation Sans", Arial, sans-serif;
    font-size: 16px;
    writing-mode: vertical-rl;
    transform: rotate(180deg);
}
```
